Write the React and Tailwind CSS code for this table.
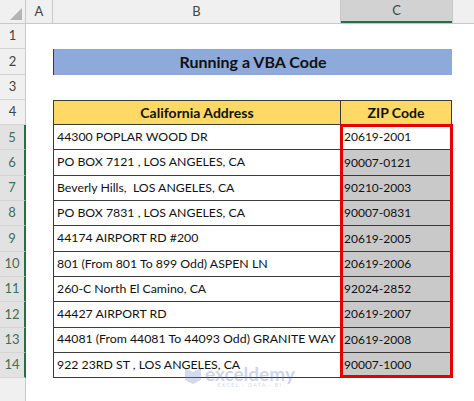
import React from "react";

const rows = [
  ["44300 POPLAR WOOD DR", "20619-2001"],
  ["PO BOX 7121 , LOS ANGELES, CA", "90007-0121"],
  ["Beverly Hills,  LOS ANGELES, CA", "90210-2003"],
  ["PO BOX 7831 , LOS ANGELES, CA", "90007-0831"],
  ["44174 AIRPORT RD #200", "20619-2005"],
  ["801 (From 801 To 899 Odd) ASPEN LN", "20619-2006"],
  ["260-C North El Camino, CA", "92024-2852"],
  ["44427 AIRPORT RD", "20619-2007"],
  ["44081 (From 44081 To 44093 Odd) GRANITE WAY", "20619-2008"],
  ["922 23RD ST , LOS ANGELES, CA", "90007-1000"],
];

function RowHead({ n, sel }) {
  return (
    <div
      className={
        "w-[26px] shrink-0 flex items-center justify-center text-[13px] border-b border-[#d4d4d4] " +
        (sel
          ? "bg-[#e2e2e2] text-[#3f6f52] border-r-2 border-r-[#217346]"
          : "bg-[#f0f0f0] text-[#444] border-r border-r-[#c8c8c8]")
      }
    >
      {n}
    </div>
  );
}

export default function App() {
  return (
    <div
      className="w-[474px] h-[401px] overflow-hidden bg-white flex flex-col"
      style={{ fontFamily: "Lato, 'Open Sans', sans-serif" }}
    >
      {/* column headers */}
      <div className="flex h-[24px] shrink-0 bg-[#f0f0f0] border-b border-[#c8c8c8] text-[13px] text-[#444]">
        <div className="w-[26px] shrink-0 relative border-r border-[#c8c8c8]">
          <div className="absolute right-[3px] bottom-[3px] w-0 h-0 border-l-[12px] border-l-transparent border-b-[12px] border-b-[#b4b4b4]" />
        </div>
        <div className="w-[27px] shrink-0 flex items-center justify-center border-r border-[#c8c8c8]">A</div>
        <div className="w-[288px] shrink-0 flex items-center justify-center border-r border-[#c8c8c8]">B</div>
        <div className="w-[111px] shrink-0 flex items-center justify-center bg-[#d2d2d2] border-b-2 border-[#217346] text-[#444]">C</div>
        <div className="flex-1 border-l border-[#c8c8c8]" />
      </div>

      {/* row 1 */}
      <div className="flex h-[25.3px] shrink-0">
        <RowHead n="1" />
        <div className="flex-1" />
      </div>
      {/* row 2 */}
      <div className="flex h-[25.3px] shrink-0">
        <RowHead n="2" />
        <div className="w-[27px] shrink-0" />
        <div className="w-[399px] shrink-0 bg-[#8eaadb] border-l border-[#3a3a3a] flex items-center justify-center font-bold text-[16px] text-[#111]">
          Running a VBA Code
        </div>
        <div className="flex-1" />
      </div>
      {/* row 3 */}
      <div className="flex h-[25.3px] shrink-0">
        <RowHead n="3" />
        <div className="flex-1" />
      </div>
      {/* row 4 */}
      <div className="flex h-[25.3px] shrink-0">
        <RowHead n="4" />
        <div className="w-[27px] shrink-0" />
        <div className="w-[288px] shrink-0 bg-[#ffd966] border border-[#3a3a3a] flex items-center justify-center font-bold text-[14px] text-[#111]">
          California Address
        </div>
        <div className="w-[111px] shrink-0 bg-[#ffd966] border-y border-r border-[#3a3a3a] flex items-center justify-center font-bold text-[14px] text-[#111]">
          ZIP Code
        </div>
        <div className="flex-1" />
      </div>

      {/* data rows */}
      <div className="relative flex flex-col shrink-0">
        {rows.map((r, i) => (
          <div key={i} className="flex h-[25.3px] shrink-0">
            <RowHead n={String(i + 5)} sel />
            <div className="w-[27px] shrink-0" />
            <div className="w-[288px] shrink-0 border-l border-r border-b border-[#3a3a3a] flex items-center pl-[3px] text-[12.3px] text-[#111] whitespace-pre">
              {r[0]}
            </div>
            <div
              className={
                "w-[111px] shrink-0 border-r border-b border-[#3a3a3a] flex items-center pl-[3px] text-[12px] text-[#111] " +
                (i === 0 ? "bg-white" : "bg-[#c9c9c9]")
              }
            >
              {r[1]}
            </div>
            <div className="flex-1" />
          </div>
        ))}
        <div className="absolute left-[340px] top-[-1px] w-[113px] bottom-0 border-[3px] border-[#e60000] pointer-events-none" />
      </div>

      {/* filler */}
      <div className="flex flex-1 relative">
        <div className="w-[26px] shrink-0 bg-[#f0f0f0] border-r border-[#c8c8c8]" />
        <div className="flex-1" />
        <div className="absolute left-[183px] top-[-12px] flex items-start gap-[2px] opacity-30 pointer-events-none">
          <svg width="20" height="18" viewBox="0 0 20 18">
            <path d="M2 2 L10 6 L18 2 L18 14 L10 18 L2 14 Z" fill="#6d87c4" />
          </svg>
          <div className="flex flex-col items-center">
            <div className="text-[19px] font-bold text-[#5a78bd] leading-[16px]">exceldemy</div>
            <div className="text-[5px] text-[#5a78bd] tracking-[1.5px] leading-[6px]">EXCEL · DATA · BI</div>
          </div>
        </div>
      </div>
    </div>
  );
}
